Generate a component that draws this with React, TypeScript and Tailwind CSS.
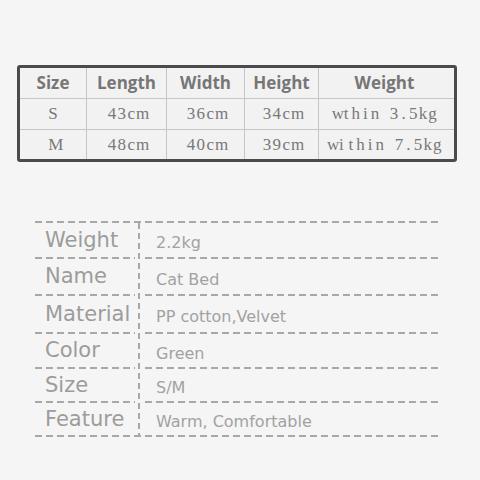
import React from "react";

const cols = ["w-[67px]", "w-[80px]", "w-[78px]", "w-[74px]", "w-[131px]"];
const header = ["Size", "Length", "Width", "Height", "Weight"];
const rows = [
  ["S", "43cm", "36cm", "34cm", "wthin 3.5kg"],
  ["M", "48cm", "40cm", "39cm", "within 7.5kg"],
];

const specs: [string, string, string][] = [
  ["Weight", "2.2kg", "h-[34px]"],
  ["Name", "Cat Bed", "h-[35px]"],
  ["Material", "PP cotton,Velvet", "h-[36px]"],
  ["Color", "Green", "h-[33px]"],
  ["Size", "S/M", "h-[32px]"],
  ["Feature", "Warm, Comfortable", "h-[32px]"],
];

const HLine = ({ w }: { w: string }) => (
  <div
    className={`${w} h-[2px] bg-[image:repeating-linear-gradient(to_right,#a8a8a8_0px,#a8a8a8_7px,transparent_7px,transparent_11px)]`}
  />
);

const Mono = ({ text }: { text: string }) => (
  <span className="inline-flex">
    {text.split("").map((ch, i) => (
      <span key={i} className="inline-block w-[9.6px] text-center">
        {ch === " " ? "\u00a0" : ch}
      </span>
    ))}
  </span>
);

export default function App() {
  return (
    <div className="w-[480px] h-[480px] bg-[#f5f5f5] pt-[65px] overflow-hidden">
      <div className="ml-[17px] w-[440px] border-[3px] border-[#4b4b4b] rounded-[3px] bg-[#f2f2f2]">
        <div className="flex h-[31px] border-b border-[#c6c6c6]">
          {header.map((h, i) => (
            <div
              key={h}
              className={`${cols[i]} ${i < 4 ? "border-r border-[#c6c6c6]" : ""} shrink-0 flex items-center justify-center text-[17px] font-bold text-[#767676] font-['Open_Sans',sans-serif]`}
            >
              {h}
            </div>
          ))}
        </div>
        {rows.map((r, ri) => (
          <div
            key={ri}
            className={`flex ${ri === 0 ? "h-[31px] border-b border-[#c6c6c6]" : "h-[29px]"}`}
          >
            {r.map((c, i) => (
              <div
                key={i}
                className={`${cols[i]} ${i < 4 ? "border-r border-[#c6c6c6]" : ""} shrink-0 flex items-center justify-center text-[17px] text-[#787878] font-['Liberation_Serif',serif] whitespace-pre`}
              >
                <Mono text={c} />
              </div>
            ))}
          </div>
        ))}
      </div>

      <div className="ml-[35px] mt-[59px] w-[405px]">
        <HLine w="w-[405px]" />
        <div className="flex">
          <div className="w-[100px] flex flex-col">
            {specs.map(([label, , h], i) => (
              <React.Fragment key={label}>
                <div
                  className={`${h} flex items-center pl-[10px] text-[21px] text-[#9c9c9c] font-['DejaVu_Sans',sans-serif] whitespace-nowrap leading-none`}
                >
                  {label}
                </div>
                {i < specs.length - 1 && <HLine w="w-[100px]" />}
              </React.Fragment>
            ))}
          </div>
          <div className="w-[10px] flex justify-start pl-[3px]">
            <div className="w-[2px] h-full bg-[image:repeating-linear-gradient(to_bottom,#a8a8a8_0px,#a8a8a8_6px,transparent_6px,transparent_10px)]" />
          </div>
          <div className="w-[295px] flex flex-col">
            {specs.map(([label, value, h], i) => (
              <React.Fragment key={label}>
                <div
                  className={`${h} flex items-center pl-[11px] pt-[6px] text-[16px] text-[#a2a2a2] font-['DejaVu_Sans',sans-serif] whitespace-nowrap leading-none`}
                >
                  {value}
                </div>
                {i < specs.length - 1 && <HLine w="w-[295px]" />}
              </React.Fragment>
            ))}
          </div>
        </div>
        <HLine w="w-[405px]" />
      </div>
    </div>
  );
}
